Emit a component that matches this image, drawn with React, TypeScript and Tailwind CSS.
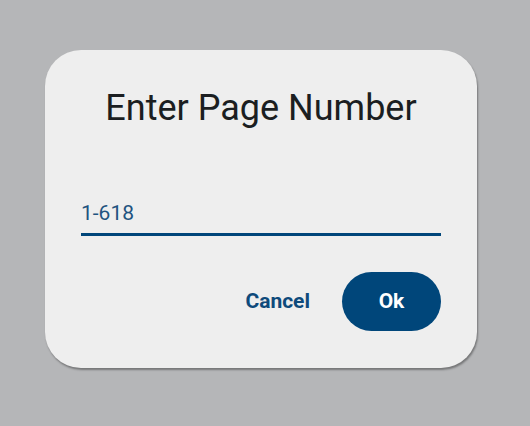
export default function App() {
  return (
    <div
      className="w-[530px] h-[426px] bg-[#b5b6b8] pl-[45px] pt-[50px]"
      style={{ fontFamily: 'Roboto, "Liberation Sans", sans-serif' }}
    >
      <div className="w-[432px] h-[318px] rounded-[36px] bg-[#eeeeee] shadow-[1px_2px_2px_rgba(0,0,0,0.35)] px-[36px] pt-[34px] flex flex-col">
        <h1 className="text-center text-[36px] leading-[48px] text-[#1b1e21]">Enter Page Number</h1>
        <div className="mt-[67px] border-b-[3px] border-[#00467a] pb-[6px]">
          <input
            type="text"
            placeholder="1-618"
            className="w-full bg-transparent outline-none text-[21px] leading-[28px] text-[#1f5380] placeholder:text-[#1f5380]"
          />
        </div>
        <div className="mt-[36px] flex items-center justify-end gap-[32px]">
          <button className="text-[21px] font-bold text-[#0e4a7b]">Cancel</button>
          <button className="w-[99px] h-[59px] rounded-full bg-[#00467a] text-white text-[21px] font-bold">Ok</button>
        </div>
      </div>
    </div>
  );
}
